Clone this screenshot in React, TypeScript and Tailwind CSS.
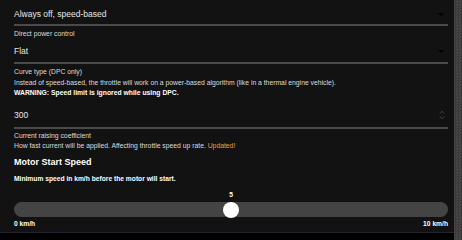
import React from "react";

const font = { fontFamily: '"Liberation Sans", Arial, sans-serif' };

function Caret() {
  return (
    <span className="mr-[4px] h-0 w-0 border-l-[3px] border-r-[3px] border-t-[3px] border-l-transparent border-r-transparent border-t-black" />
  );
}

function Spinner() {
  return (
    <svg width="6" height="10" viewBox="0 0 6 10" className="mr-[3px]">
      <path d="M0.8 3.6 L3 1.2 L5.2 3.6" fill="none" stroke="#4a4a4a" strokeWidth="0.9" />
      <path d="M0.8 6.4 L3 8.8 L5.2 6.4" fill="none" stroke="#4a4a4a" strokeWidth="0.9" />
    </svg>
  );
}

export default function App() {
  return (
    <div
      className="flex h-[240px] w-[462px] overflow-hidden bg-black text-[#e6e6e6]"
      style={font}
    >
      <div className="flex w-[454px] flex-col">
        <div className="flex h-[232px] flex-col bg-[#121212] pl-[14px] pr-[6px]">
          {/* Select 1 */}
          <div className="flex h-[26px] items-center justify-between border-b-2 border-[#4a4a4a] pt-[4px] text-[8.5px]">
            <span>Always off, speed-based</span>
            <Caret />
          </div>
          <div className="h-[16px] text-[6.8px] leading-[16px] text-[#dcdcdc]">Direct power control</div>
          <div className="flex h-[22px] items-center justify-between border-b-2 border-[#4a4a4a] pb-[2px] text-[8.5px]">
            <span>Flat</span>
            <Caret />
          </div>
          <div className="mt-[2px] h-[12px] text-[6.8px] leading-[12px] text-[#dcdcdc]">Curve type (DPC only)</div>
          <div className="h-[10px] text-[6.8px] leading-[10px] text-[#dcdcdc]">
            Instead of speed-based, the throttle will work on a power-based algorithm (like in a thermal engine vehicle).
          </div>
          <div className="h-[9px] text-[6.8px] font-bold leading-[9px] text-white">
            WARNING: Speed limit is ignored while using DPC.
          </div>
          <div className="flex h-[32px] items-center justify-between border-b-2 border-[#4a4a4a] pt-[6px] text-[8.5px]">
            <span>300</span>
            <Spinner />
          </div>
          <div className="mt-[2px] h-[10px] text-[6.8px] leading-[10px] text-[#dcdcdc]">Current raising coefficient</div>
          <div className="h-[9px] text-[6.8px] leading-[9px] text-[#dcdcdc]">
            How fast current will be applied. Affecting throttle speed up rate.{" "}
            <span className="text-[#f0a030]">Updated!</span>
          </div>
          <div className="mt-[6px] h-[12px] text-[9px] font-bold leading-[12px] text-white">Motor Start Speed</div>
          <div className="mt-[5px] h-[12px] text-[6.7px] font-bold leading-[12px] text-white">
            Minimum speed in km/h before the motor will start.
          </div>
          {/* Slider */}
          <div className="relative mt-[5px] h-[10px] text-center text-[6.7px] font-bold leading-[10px] text-white">5</div>
          <div className="relative mt-[2px] h-[15px] rounded-full bg-[#444444]">
            <div className="absolute left-1/2 top-1/2 h-[16px] w-[16px] -translate-x-1/2 -translate-y-1/2 rounded-full bg-white" />
          </div>
          <div className="mt-[2px] flex h-[10px] justify-between text-[6.7px] font-bold leading-[10px] text-white">
            <span>0 km/h</span>
            <span>10 km/h</span>
          </div>
        </div>
        <div className="h-[1px] bg-[#23232e]" />
        <div className="flex-1 bg-black" />
      </div>
      <div className="h-[240px] w-[8px] bg-[repeating-conic-gradient(#3a3a3a_0%_25%,#484848_0%_50%)] bg-[length:3px_3px]" />
    </div>
  );
}
